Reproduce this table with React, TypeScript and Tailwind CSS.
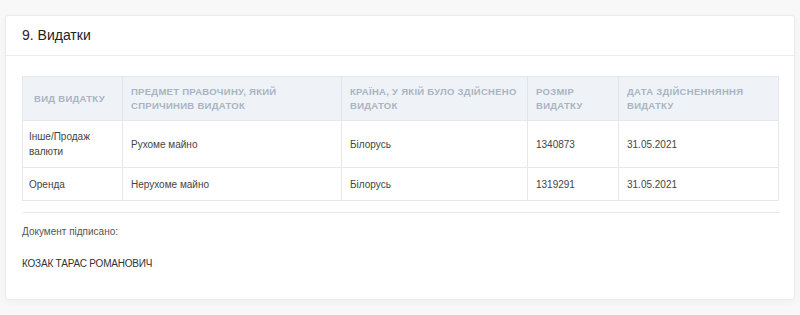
const rows = [
  { kind: "Інше/Продаж валюти", subject: "Рухоме майно", country: "Білорусь", amount: "1340873", date: "31.05.2021", tall: true },
  { kind: "Оренда", subject: "Нерухоме майно", country: "Білорусь", amount: "1319291", date: "31.05.2021", tall: false },
];

const headers = [
  "Вид видатку",
  "Предмет правочину, який спричинив видаток",
  "Країна, у якій було здійснено видаток",
  "Розмір видатку",
  "Дата здійсненняння видатку",
];

export default function App() {
  return (
    <div className="w-[800px] h-[315px] bg-[#f8f8f9] pt-[15px] px-[5px] font-['Liberation_Sans',Arial,sans-serif]">
      <div className="bg-white border border-[#ececec] rounded-[3px] shadow-[0_2px_6px_rgba(0,0,0,0.04)] h-[285px]">
        {/* Section title */}
        <div className="h-[40px] border-b border-[#ececec] flex items-center px-4">
          <h2 className="text-[14px] text-[#222]">9. Видатки</h2>
        </div>

        <div className="px-4 pt-5">
          <table className="w-[757px] table-fixed border border-[#e4e8ec] border-collapse text-[10px]">
            <colgroup>
              <col className="w-[100px]" />
              <col className="w-[219px]" />
              <col className="w-[186px]" />
              <col className="w-[91px]" />
              <col />
            </colgroup>
            <thead>
              <tr className="bg-[#eff3f7] h-[44px]">
                {headers.map((h, i) => (
                  <th
                    key={i}
                    className={`text-left align-middle font-bold uppercase text-[9.5px] tracking-[0.03em] text-[#a9b4c1] leading-[14px] border-r border-[#e0e5ea] last:border-r-0 ${
                      i === 0 ? "pl-[11px] pr-2" : "px-2"
                    } ${i === 1 ? "pr-10" : ""}`}
                  >
                    {h}
                  </th>
                ))}
              </tr>
            </thead>
            <tbody className="text-[#444]">
              {rows.map((r, i) => (
                <tr key={i} className={`${r.tall ? "h-[47px]" : "h-[33px]"} border-t border-[#e4e8ec]`}>
                  <td className="pl-[6px] pr-6 leading-[15px] border-r border-[#e4e8ec]">{r.kind}</td>
                  <td className="px-2 border-r border-[#e4e8ec]">{r.subject}</td>
                  <td className="px-2 border-r border-[#e4e8ec]">{r.country}</td>
                  <td className="px-2 border-r border-[#e4e8ec]">{r.amount}</td>
                  <td className="px-2">{r.date}</td>
                </tr>
              ))}
            </tbody>
          </table>

          <div className="mt-[11px] w-[758px] border-t border-[#e8e8e8] pt-[11px] text-[10px]">
            <p className="text-[#555]">Документ підписано:</p>
            <p className="mt-[17px] text-[#333] tracking-[-0.02em]">КОЗАК ТАРАС РОМАНОВИЧ</p>
          </div>
        </div>
      </div>
    </div>
  );
}
